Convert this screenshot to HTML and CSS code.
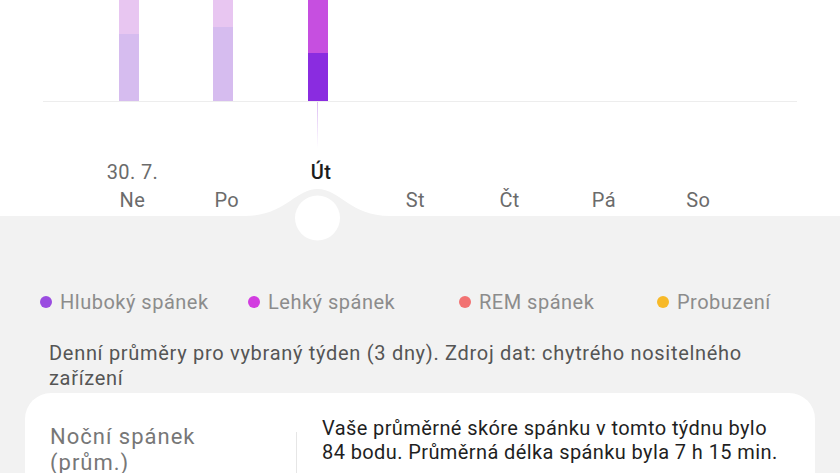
FILE: index.html
```html
<!DOCTYPE html>
<html lang="cs">
<head>
<meta charset="utf-8">
<link rel="stylesheet" href="styles.css">
</head>
<body>
<div class="screen">
  <section class="chart">
    <div class="plot">
      <div class="bar-col"><div class="bar"><div class="seg seg-light-top" style="height:34px"></div><div class="seg seg-light-bottom" style="height:67px"></div></div></div>
      <div class="bar-col"><div class="bar"><div class="seg seg-light-top" style="height:27px"></div><div class="seg seg-light-bottom" style="height:74px"></div></div></div>
      <div class="bar-col"><div class="bar"><div class="seg seg-light" style="height:53px"></div><div class="seg seg-deep" style="height:48px"></div></div></div>
      <div class="bar-col"></div>
      <div class="bar-col"></div>
      <div class="bar-col"></div>
      <div class="bar-col"></div>
    </div>
    <div class="axis">
      <div class="tick"><span class="date">30. 7.</span><span class="day">Ne</span></div>
      <div class="tick"><span class="date"></span><span class="day">Po</span></div>
      <div class="tick selected"><span class="marker"></span><span class="date">Út</span><span class="day">&nbsp;</span></div>
      <div class="tick"><span class="date"></span><span class="day">St</span></div>
      <div class="tick"><span class="date"></span><span class="day">Čt</span></div>
      <div class="tick"><span class="date"></span><span class="day">Pá</span></div>
      <div class="tick"><span class="date"></span><span class="day">So</span></div>
    </div>
    <svg class="knob" width="160" height="60" viewBox="0 0 160 60">
      <path d="M0 27 C 40 27, 50 0, 72.5 0 C 95 0, 105 27, 145 27 L 160 27 L160 60 L0 60 Z" fill="#f2f2f2"/>
      <circle cx="72.5" cy="29" r="22.5" fill="#ffffff"/>
    </svg>
  </section>
  <section class="panel">
    <ul class="legend">
      <li class="legend-item"><span class="dot dot-deep"></span>Hluboký spánek</li>
      <li class="legend-item"><span class="dot dot-light"></span>Lehký spánek</li>
      <li class="legend-item"><span class="dot dot-rem"></span>REM spánek</li>
      <li class="legend-item"><span class="dot dot-awake"></span>Probuzení</li>
    </ul>
    <p class="note">Denní průměry pro vybraný týden (3 dny). Zdroj dat: chytrého nositelného zařízení</p>
    <div class="card">
      <div class="card-title">Noční spánek<br>(prům.)</div>
      <div class="card-divider"></div>
      <div class="card-text">Vaše průměrné skóre spánku v tomto týdnu bylo 84 bodu. Průměrná délka spánku byla 7 h 15 min.</div>
    </div>
  </section>
</div>
</body>
</html>
```
FILE: styles.css
```css
* { box-sizing: border-box; }
html, body { margin: 0; padding: 0; }
body {
  width: 840px;
  height: 473px;
  overflow: hidden;
  font-family: Roboto, "Noto Sans", "Liberation Sans", sans-serif;
  background: #f2f2f2;
}
.screen { width: 840px; height: 473px; overflow: hidden; }

.chart {
  position: relative;
  background: #ffffff;
  height: 216px;
}
.plot {
  margin: 0 43px;
  height: 102px;
  border-bottom: 1px solid #ededed;
  display: grid;
  grid-template-columns: repeat(7, 94.3px);
  padding-left: 38.8px;
  align-items: end;
}
.bar-col { display: flex; justify-content: center; }
.bar { width: 20px; display: flex; flex-direction: column; }
.seg-light-top { background: #e8c6f1; }
.seg-light-bottom { background: #d6bcef; }
.seg-light { background: #c64fe0; }
.seg-deep { background: #8a2ce0; }

.axis {
  display: grid;
  grid-template-columns: repeat(7, 94.3px);
  padding-left: 85.3px;
}
.tick {
  position: relative;
  display: flex;
  flex-direction: column;
  align-items: center;
  font-size: 20px;
  letter-spacing: 0.4px;
  line-height: 28px;
  color: #6b6b6b;
  padding-top: 56px;
}
.date { height: 28px; white-space: nowrap; }
.day { white-space: nowrap; }
.selected .date { color: #1c1c1c; font-weight: 500; }
.marker {
  position: absolute;
  top: 0;
  left: 50%;
  margin-left: -4.5px;
  width: 1px;
  height: 46px;
  background: linear-gradient(#dcbdf3, rgba(232, 210, 248, 0));
}

.knob {
  position: absolute;
  left: 245px;
  top: 189px;
}

.panel {
  padding: 74px 0 0;
}
.legend {
  list-style: none;
  margin: 0;
  padding: 0 0 0 40px;
  display: grid;
  grid-template-columns: 208px 211px 198px auto;
  font-size: 20px;
  letter-spacing: 0.5px;
  line-height: 24px;
  color: #8c8c8c;
}
.legend-item { display: flex; align-items: center; white-space: nowrap; }
.dot {
  width: 12px;
  height: 12px;
  border-radius: 50%;
  margin-right: 8px;
  flex: none;
}
.dot-deep { background: #9a4ce0; }
.dot-light { background: #d23de0; }
.dot-rem { background: #f27272; }
.dot-awake { background: #f7b928; }

.note {
  margin: 27px 0 0;
  padding: 0 60px 0 49px;
  font-size: 20px;
  letter-spacing: 0.7px;
  line-height: 25px;
  color: #555555;
}

.card {
  margin: 2px 25px 0;
  background: #ffffff;
  border-radius: 26px;
  padding: 23px 35px 30px 25px;
  display: flex;
  height: 120px;
}
.card-title {
  width: 246px;
  flex: none;
  padding-top: 8px;
  font-size: 22px;
  letter-spacing: 1px;
  line-height: 26px;
  color: #777777;
}
.card-divider {
  flex: none;
  width: 1px;
  margin-top: 16px;
  background: #e6e6e6;
}
.card-text {
  padding-left: 25px;
  font-size: 20px;
  letter-spacing: 0.4px;
  line-height: 24px;
  color: #1f1f1f;
}
```
